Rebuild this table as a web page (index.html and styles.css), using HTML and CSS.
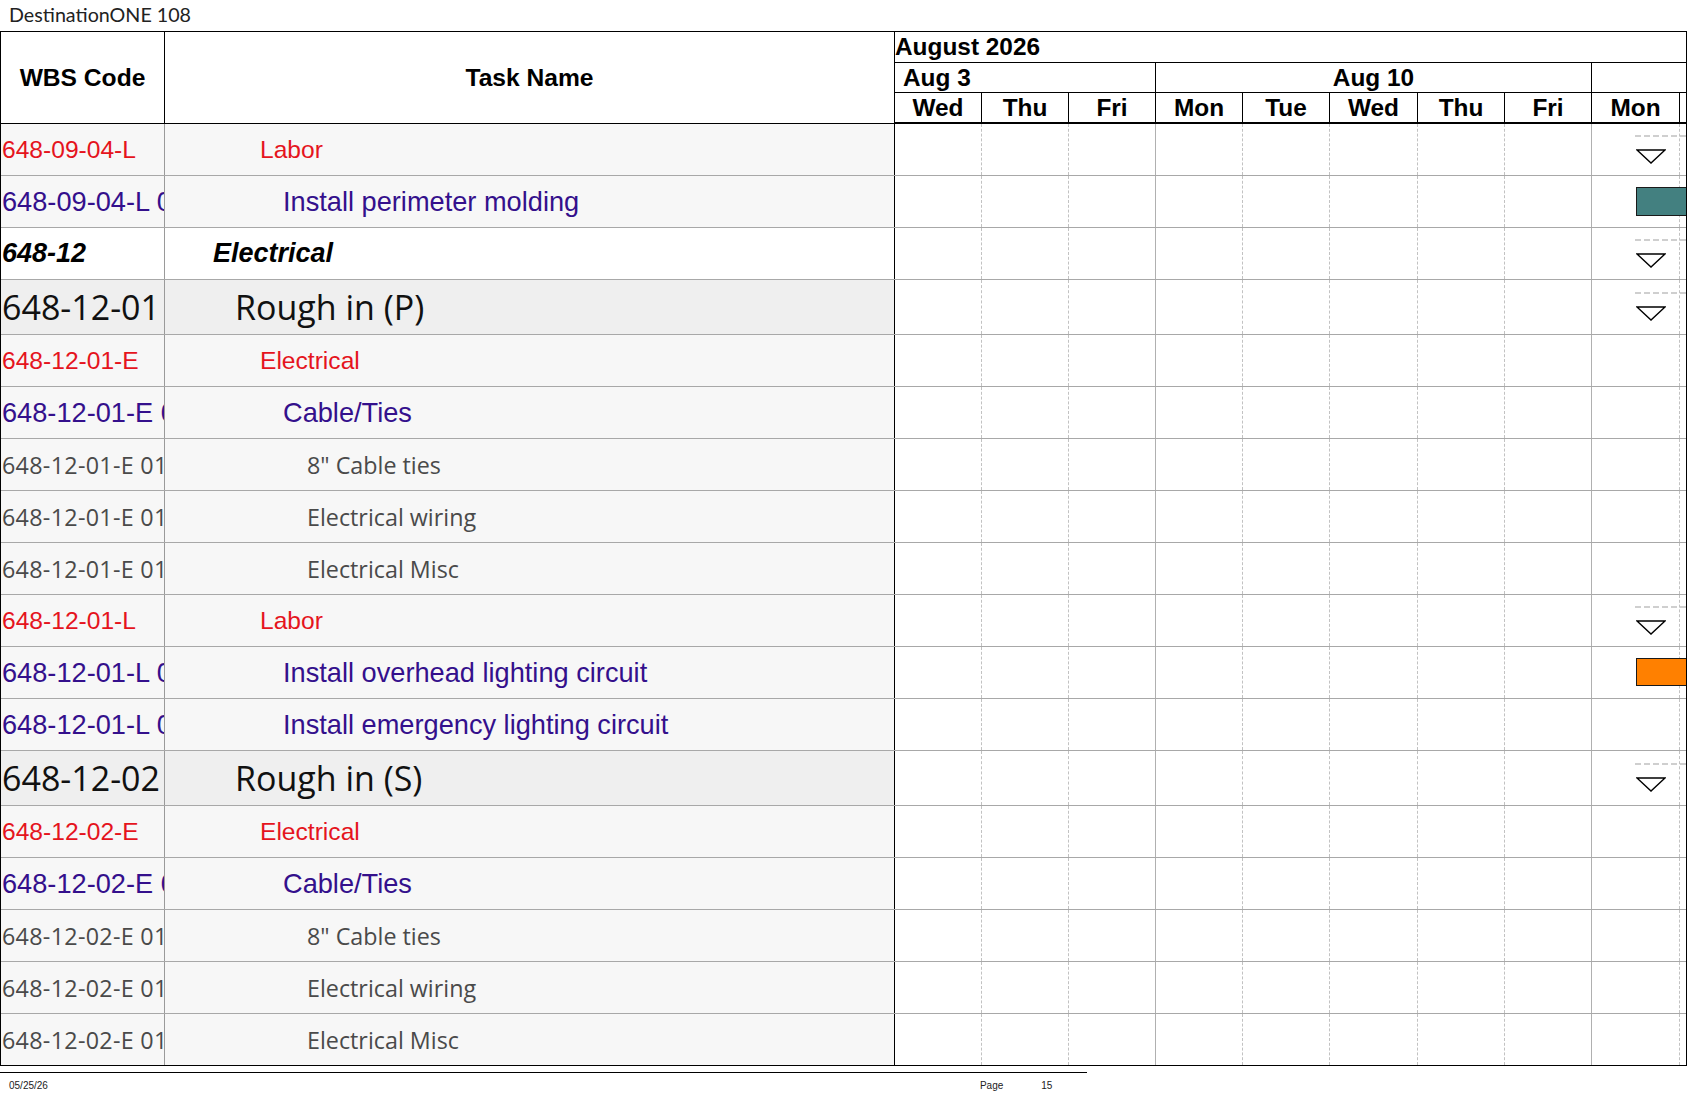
FILE: index.html
```html
<!DOCTYPE html>
<html>
<head>
<meta charset="utf-8">
<title>DestinationONE 108</title>
<link rel="stylesheet" href="styles.css">
</head>
<body>
<div class="title">DestinationONE 108</div>
<div class="sheet">
  <div class="head">
    <div class="h-wbs">WBS Code</div>
    <div class="h-task">Task Name</div>
    <div class="h-gantt">
      <div class="month">August 2026</div>
      <div class="weeks">
        <div class="week w3">Aug 3</div>
        <div class="week w5">Aug 10</div>
        <div class="week wx"></div>
      </div>
      <div class="days">
        <div class="day">Wed</div><div class="day">Thu</div><div class="day">Fri</div>
        <div class="day">Mon</div><div class="day">Tue</div><div class="day">Wed</div>
        <div class="day">Thu</div><div class="day">Fri</div><div class="day">Mon</div>
        <div class="day last"></div>
      </div>
    </div>
  </div>

  <div class="row red">
    <div class="wbs">648-09-04-L</div><div class="task l3">Labor</div>
    <div class="gantt"><span></span><span></span><span class="wk"></span><span></span><span></span><span></span><span></span><span class="wk"></span><span></span><i></i><b class="sum"></b><svg class="tri" viewBox="0 0 30 15"><polygon points="1,1 29,1 15,14"/></svg></div>
  </div>
  <div class="row purple">
    <div class="wbs">648-09-04-L 01</div><div class="task l4">Install perimeter molding</div>
    <div class="gantt"><span></span><span></span><span class="wk"></span><span></span><span></span><span></span><span></span><span class="wk"></span><span></span><i></i><b class="bar teal"></b></div>
  </div>
  <div class="row white bi">
    <div class="wbs">648-12</div><div class="task l1">Electrical</div>
    <div class="gantt"><span></span><span></span><span class="wk"></span><span></span><span></span><span></span><span></span><span class="wk"></span><span></span><i></i><b class="sum"></b><svg class="tri" viewBox="0 0 30 15"><polygon points="1,1 29,1 15,14"/></svg></div>
  </div>
  <div class="row big">
    <div class="wbs">648-12-01</div><div class="task l2">Rough in (P)</div>
    <div class="gantt"><span></span><span></span><span class="wk"></span><span></span><span></span><span></span><span></span><span class="wk"></span><span></span><i></i><b class="sum"></b><svg class="tri" viewBox="0 0 30 15"><polygon points="1,1 29,1 15,14"/></svg></div>
  </div>
  <div class="row red">
    <div class="wbs">648-12-01-E</div><div class="task l3">Electrical</div>
    <div class="gantt"><span></span><span></span><span class="wk"></span><span></span><span></span><span></span><span></span><span class="wk"></span><span></span><i></i></div>
  </div>
  <div class="row purple">
    <div class="wbs">648-12-01-E 01</div><div class="task l4">Cable/Ties</div>
    <div class="gantt"><span></span><span></span><span class="wk"></span><span></span><span></span><span></span><span></span><span class="wk"></span><span></span><i></i></div>
  </div>
  <div class="row gray">
    <div class="wbs">648-12-01-E 01 01</div><div class="task l5">8" Cable ties</div>
    <div class="gantt"><span></span><span></span><span class="wk"></span><span></span><span></span><span></span><span></span><span class="wk"></span><span></span><i></i></div>
  </div>
  <div class="row gray">
    <div class="wbs">648-12-01-E 01 02</div><div class="task l5">Electrical wiring</div>
    <div class="gantt"><span></span><span></span><span class="wk"></span><span></span><span></span><span></span><span></span><span class="wk"></span><span></span><i></i></div>
  </div>
  <div class="row gray">
    <div class="wbs">648-12-01-E 01 03</div><div class="task l5">Electrical Misc</div>
    <div class="gantt"><span></span><span></span><span class="wk"></span><span></span><span></span><span></span><span></span><span class="wk"></span><span></span><i></i></div>
  </div>
  <div class="row red">
    <div class="wbs">648-12-01-L</div><div class="task l3">Labor</div>
    <div class="gantt"><span></span><span></span><span class="wk"></span><span></span><span></span><span></span><span></span><span class="wk"></span><span></span><i></i><b class="sum"></b><svg class="tri" viewBox="0 0 30 15"><polygon points="1,1 29,1 15,14"/></svg></div>
  </div>
  <div class="row purple">
    <div class="wbs">648-12-01-L 01</div><div class="task l4">Install overhead lighting circuit</div>
    <div class="gantt"><span></span><span></span><span class="wk"></span><span></span><span></span><span></span><span></span><span class="wk"></span><span></span><i></i><b class="bar orange"></b></div>
  </div>
  <div class="row purple">
    <div class="wbs">648-12-01-L 02</div><div class="task l4">Install emergency lighting circuit</div>
    <div class="gantt"><span></span><span></span><span class="wk"></span><span></span><span></span><span></span><span></span><span class="wk"></span><span></span><i></i></div>
  </div>
  <div class="row big">
    <div class="wbs">648-12-02</div><div class="task l2">Rough in (S)</div>
    <div class="gantt"><span></span><span></span><span class="wk"></span><span></span><span></span><span></span><span></span><span class="wk"></span><span></span><i></i><b class="sum"></b><svg class="tri" viewBox="0 0 30 15"><polygon points="1,1 29,1 15,14"/></svg></div>
  </div>
  <div class="row red">
    <div class="wbs">648-12-02-E</div><div class="task l3">Electrical</div>
    <div class="gantt"><span></span><span></span><span class="wk"></span><span></span><span></span><span></span><span></span><span class="wk"></span><span></span><i></i></div>
  </div>
  <div class="row purple">
    <div class="wbs">648-12-02-E 01</div><div class="task l4">Cable/Ties</div>
    <div class="gantt"><span></span><span></span><span class="wk"></span><span></span><span></span><span></span><span></span><span class="wk"></span><span></span><i></i></div>
  </div>
  <div class="row gray">
    <div class="wbs">648-12-02-E 01 01</div><div class="task l5">8" Cable ties</div>
    <div class="gantt"><span></span><span></span><span class="wk"></span><span></span><span></span><span></span><span></span><span class="wk"></span><span></span><i></i></div>
  </div>
  <div class="row gray">
    <div class="wbs">648-12-02-E 01 02</div><div class="task l5">Electrical wiring</div>
    <div class="gantt"><span></span><span></span><span class="wk"></span><span></span><span></span><span></span><span></span><span class="wk"></span><span></span><i></i></div>
  </div>
  <div class="row gray lastrow">
    <div class="wbs">648-12-02-E 01 03</div><div class="task l5">Electrical Misc</div>
    <div class="gantt"><span></span><span></span><span class="wk"></span><span></span><span></span><span></span><span></span><span class="wk"></span><span></span><i></i></div>
  </div>
</div>
<div class="footer">
  <span class="date">05/25/26</span>
  <span class="page">Page</span>
  <span class="num">15</span>
</div>
</body>
</html>
```

FILE: styles.css
```css
html, body {
  margin: 0;
  padding: 0;
  background: #fff;
}
body {
  width: 1687px;
  font-family: "Liberation Sans", Arial, sans-serif;
  color: #000;
}
.title {
  height: 31px;
  padding-left: 9px;
  font-family: Lato, "DejaVu Sans", sans-serif;
  font-size: 19.7px;
  line-height: 29px;
  color: #222;
}
.sheet {
  width: 1687px;
  box-sizing: border-box;
  border: 1px solid #000;
}
.head {
  display: grid;
  grid-template-columns: 164px 730px 1fr;
  height: 92px;
}
.h-wbs, .h-task {
  display: flex;
  align-items: center;
  justify-content: center;
  font-weight: bold;
  font-size: 24.6px;
  border-right: 1px solid #000;
  border-bottom: 1px solid #000;
  box-sizing: border-box;
}
.h-gantt {
  display: flex;
  flex-direction: column;
}
.month {
  height: 31px;
  box-sizing: border-box;
  border-bottom: 1px solid #000;
  font-weight: bold;
  font-size: 24.4px;
  line-height: 30px;
}
.weeks {
  display: grid;
  grid-template-columns: 261px 436px 1fr;
  height: 30px;
  box-sizing: border-box;
  border-bottom: 1px solid #000;
}
.week {
  border-right: 1px solid #000;
  font-weight: bold;
  font-size: 24.4px;
  line-height: 29px;
}
.week.w3 { padding-left: 8px; }
.week.w5 { text-align: center; }
.week.wx { border-right: 0; }
.days {
  display: grid;
  grid-template-columns: repeat(5, 87px) 88px 87px 87px 88px 1fr;
  height: 31px;
  box-sizing: border-box;
  border-bottom: 2px solid #000;
}
.day {
  border-right: 1px solid #000;
  text-align: center;
  font-weight: bold;
  font-size: 24.4px;
  line-height: 29px;
}
.day.last { border-right: 0; }

.row {
  display: grid;
  grid-template-columns: 164px 730px 1fr;
  height: 52px;
  box-sizing: border-box;
  border-bottom: 1px solid #a8a8a8;
}
.row.big { height: 55px; }
.row.lastrow { border-bottom: 0; height: 51px; }
.wbs {
  display: flex;
  align-items: center;
  padding-left: 1px;
  overflow: hidden;
  white-space: nowrap;
  border-right: 1px solid #9a9a9a;
  background: #f7f7f7;
}
.task {
  display: flex;
  align-items: center;
  overflow: hidden;
  white-space: nowrap;
  border-right: 1px solid #000;
  background: #f7f7f7;
}
.task.l1 { padding-left: 48px; }
.task.l2 { padding-left: 70px; }
.task.l3 { padding-left: 95px; }
.task.l4 { padding-left: 118px; }
.task.l5 { padding-left: 142px; }

.row.red { color: #e5141d; font-size: 24.6px; }
.row.purple { color: #34108c; font-size: 27.2px; }
.row.white .wbs, .row.white .task { background: #fff; }
.row.bi { font-weight: bold; font-style: italic; font-size: 27px; }
.row.big {
  font-family: "Open Sans", "Noto Sans", sans-serif;
  font-size: 34px;
  color: #111;
}
.row.big .wbs, .row.big .task { background: #efefef; }
.row.gray {
  font-family: "Open Sans", "Noto Sans", sans-serif;
  font-size: 23.3px;
  color: #4a4a4a;
}
.row.gray .wbs { letter-spacing: 0.3px; }

.gantt {
  position: relative;
  display: grid;
  grid-template-columns: repeat(5, 87px) 88px 87px 87px 88px 1fr;
  background: #fff;
  overflow: hidden;
}
.gantt span {
  border-right: 1px dashed #c2c2c2;
}
.gantt span.wk {
  border-right: 1px solid #b0b0b0;
}
.gantt .sum {
  position: absolute;
  left: 740px;
  right: 0;
  top: 11px;
  height: 0;
  border-top: 2px dashed #cfcfcf;
}
.gantt .tri {
  position: absolute;
  left: 741px;
  top: 25px;
  width: 30px;
  height: 15px;
}
.row.big .gantt .sum { top: 12px; }
.row.big .gantt .tri { top: 26px; }
.tri polygon {
  fill: #fff;
  stroke: #000;
  stroke-width: 1.4;
}
.gantt .bar {
  position: absolute;
  left: 741px;
  right: -4px;
  top: 11px;
  height: 29px;
  box-sizing: border-box;
  border: 1px solid #1a1a1a;
}
.bar.teal { background: #438080; }
.bar.orange { background: #ff8000; height: 28px; }

.footer {
  position: relative;
  width: 1087px;
  margin-top: 6px;
  border-top: 1px solid #000;
  height: 24px;
  font-family: "Liberation Sans Narrow", "Liberation Sans", Arial, sans-serif;
  font-size: 10px;
  color: #222;
  display: flex;
  align-items: center;
}
.footer .date { margin-left: 9px; }
.footer .page { margin-left: 932px; }
.footer .num { margin-left: 38px; }
```
